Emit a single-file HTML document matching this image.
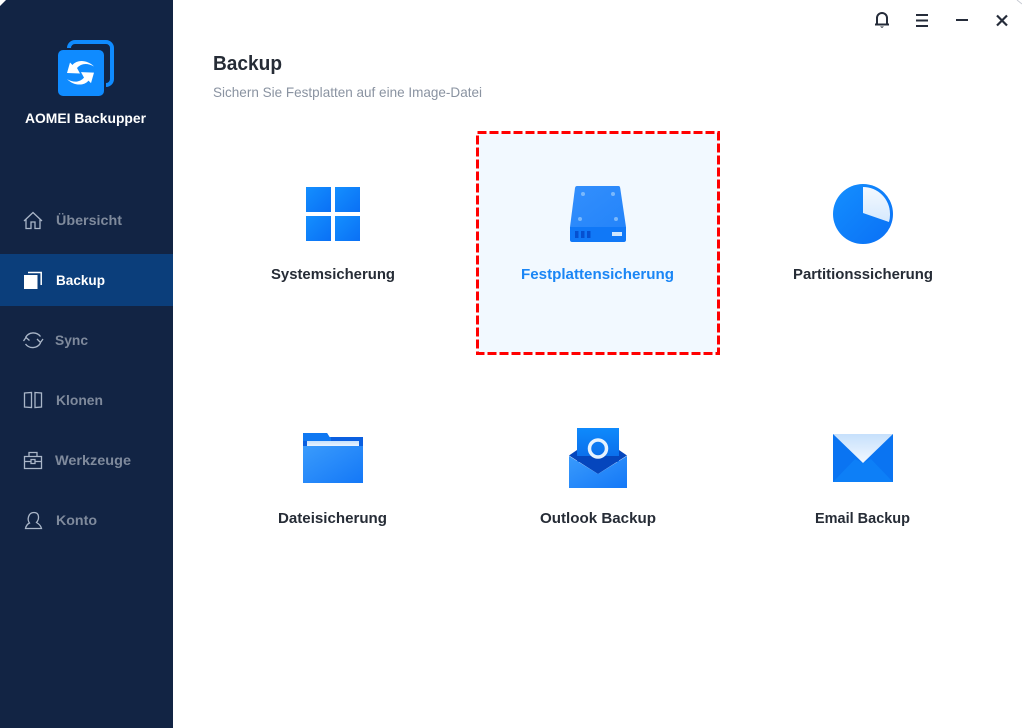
<!DOCTYPE html>
<html><head><meta charset="utf-8"><title>AOMEI Backupper</title>
<style>
html,body{margin:0;padding:0;background:#fff;width:1022px;height:728px;overflow:hidden}
svg{display:block}
text{font-family:"Liberation Sans",sans-serif}
.n{font-size:14px;font-weight:700;fill:#7f8a9c}
.l{font-size:15px;font-weight:700;fill:#262c36}
</style></head><body>
<svg width="1022" height="728" viewBox="0 0 1022 728" xmlns="http://www.w3.org/2000/svg">
<defs>
<linearGradient id="b" x1="0" y1="0" x2="1" y2="1"><stop offset="0" stop-color="#148fff"/><stop offset="1" stop-color="#0a70f5"/></linearGradient>
<linearGradient id="b2" x1="0" y1="0" x2="1" y2="1"><stop offset="0" stop-color="#3a9bfc"/><stop offset="1" stop-color="#1478f7"/></linearGradient>
<linearGradient id="d" x1="0" y1="0" x2="1" y2="1"><stop offset="0" stop-color="#338ffc"/><stop offset="1" stop-color="#2484fa"/></linearGradient>
<linearGradient id="w" x1="0" y1="0" x2="0" y2="1"><stop offset="0" stop-color="#f4f9ff"/><stop offset="1" stop-color="#d6e9fd"/></linearGradient>
<linearGradient id="w2" x1="0" y1="0" x2="0" y2="1"><stop offset="0" stop-color="#c6e0fc"/><stop offset="1" stop-color="#f2f8ff"/></linearGradient>
<linearGradient id="o" x1="0" y1="0" x2="0" y2="1"><stop offset="0" stop-color="#0f8afc"/><stop offset="1" stop-color="#0a6ae8"/></linearGradient>
</defs>
<rect x="0" y="0" width="173" height="728" fill="#122444"/>
<path d="M0 0H6L0 6Z" fill="#fff"/>
<path d="M1017 0L1022 4" stroke="#c8ccd4" stroke-width="1" fill="none"/>
<rect x="0" y="254" width="173" height="52" fill="#0b3e7b"/>

<!-- logo -->
<rect x="69" y="42" width="43" height="43" rx="6" fill="none" stroke="#0f8bff" stroke-width="4"/>
<rect x="56" y="48" width="50" height="50" rx="6" fill="#122444"/>
<rect x="58" y="50" width="46" height="46" rx="5" fill="#0f8bff"/>
<g fill="#fff">
<path d="M70 62.500L72.500 65C77 59.500 87 59.500 94 66.500C87 62.500 81 63.500 77 68L80 73.500L67 73Z"/>
<path d="M70 62.500L72.500 65C77 59.500 87 59.500 94 66.500C87 62.500 81 63.500 77 68L80 73.500L67 73Z" transform="rotate(180 80.500 72.800)"/>
</g>
<text x="25" y="123" font-size="14" font-weight="700" fill="#fff" textLength="121" lengthAdjust="spacingAndGlyphs">AOMEI Backupper</text>

<!-- nav -->
<g fill="none" stroke="#aab6c8" stroke-width="1.300">
<path d="M24 221L33 212.500L42 221M26 219V228.500H31V222H35V228.500H40V219"/>
<path d="M25.500 337.500A9 9 0 0 1 40.500 336.500M40.500 343A9 9 0 0 1 25.500 344"/>
<path d="M23.500 341L26 337.500L29.500 340.500M37 339L40.500 342.500L43 339"/>
<path d="M24.500 393L31.500 392.500V407.500L24.500 407ZM35 392.500L41.500 393V407L35 407.500Z"/>
<path d="M24.500 456.500H41.500V468.500H24.500ZM29 456.500V452.500H37V456.500M24.500 461.500H31M35 461.500H41.500M31 459.500H35V463.500H31Z"/>
<path d="M29.500 523C27 520 28 512.500 34 512.500C39.500 512.500 39.500 519 36.500 522.500C39 524 41 526 41.500 528.500H25.500C26 526 27.500 524 29.500 523Z"/>
</g>
<rect x="24" y="275" width="13.500" height="14" fill="#fff"/>
<path d="M28 272.500H41.200V285" fill="none" stroke="#fff" stroke-width="1.500"/>
<text class="n" x="56" y="225" textLength="66" lengthAdjust="spacingAndGlyphs">Übersicht</text>
<text x="56" y="285" font-size="14" font-weight="700" fill="#fff" textLength="49" lengthAdjust="spacingAndGlyphs">Backup</text>
<text class="n" x="55" y="345" textLength="33" lengthAdjust="spacingAndGlyphs">Sync</text>
<text class="n" x="56" y="405" textLength="47" lengthAdjust="spacingAndGlyphs">Klonen</text>
<text class="n" x="55" y="465" textLength="76" lengthAdjust="spacingAndGlyphs">Werkzeuge</text>
<text class="n" x="56" y="525" textLength="41" lengthAdjust="spacingAndGlyphs">Konto</text>

<!-- window controls -->
<g fill="none" stroke="#252c3a" stroke-width="2">
<path d="M877 24.500V18A5 5 0 0 1 887 18V24.500M875 24.500H889"/>
<path d="M916 15H928M916 20.500H928M916 26H928"/>
<path d="M956 20H968"/>
<path d="M997 15.500L1007 25.500M1007 15.500L997 25.500" stroke-width="2.200"/>
</g>
<path d="M880 26.500H884L882 28Z" fill="#252c3a"/>

<!-- header -->
<text x="213" y="70" font-size="20" font-weight="700" fill="#262c36" textLength="69" lengthAdjust="spacingAndGlyphs">Backup</text>
<text x="213" y="97" font-size="14" fill="#8a93a1" textLength="269" lengthAdjust="spacingAndGlyphs">Sichern Sie Festplatten auf eine Image-Datei</text>

<!-- selected -->
<rect x="477.500" y="132.500" width="241" height="221" fill="#f2f9ff" stroke="#f00" stroke-width="3" stroke-dasharray="9 3"/>

<!-- windows icon -->
<rect x="306" y="187" width="25" height="25" fill="url(#b)"/>
<rect x="335" y="187" width="25" height="25" fill="url(#b)"/>
<rect x="306" y="216" width="25" height="25" fill="url(#b)"/>
<rect x="335" y="216" width="25" height="25" fill="url(#b)"/>
<text class="l" x="271" y="279" textLength="124" lengthAdjust="spacingAndGlyphs">Systemsicherung</text>

<!-- disk icon -->
<path d="M577 186H618.500C619.500 186 620 186.800 620.200 188L626 227H570L575 188C575.200 186.800 576 186 577 186Z" fill="url(#d)"/>
<path d="M570 227H626V240C626 241.200 625 242 624 242H572C571 242 570 241.200 570 240Z" fill="#1078f7"/>
<circle cx="583" cy="194" r="2" fill="#7ab8fb"/><circle cx="613" cy="194" r="2" fill="#7ab8fb"/>
<circle cx="580" cy="219" r="2" fill="#7ab8fb"/><circle cx="616" cy="219" r="2" fill="#7ab8fb"/>
<rect x="575" y="231" width="3.500" height="7" fill="#0550d0"/><rect x="581" y="231" width="3.500" height="7" fill="#0550d0"/><rect x="587" y="231" width="3.500" height="7" fill="#0550d0"/>
<rect x="612" y="232" width="10" height="4" fill="#cfe6fd"/>
<text x="521" y="279" font-size="15" font-weight="700" fill="#1a86f5" textLength="153" lengthAdjust="spacingAndGlyphs">Festplattensicherung</text>

<!-- pie icon -->
<circle cx="863" cy="214" r="30" fill="url(#b)"/>
<path d="M863 187A27 27 0 0 1 890 214A27 27 0 0 1 889 222L863 213Z" fill="url(#w)"/>
<text class="l" x="793" y="279" textLength="140" lengthAdjust="spacingAndGlyphs">Partitionssicherung</text>

<!-- folder icon -->
<path d="M303 433H327L329.500 437H363V446H303Z" fill="#0a5fe0"/>
<path d="M303 433H327L329.500 437H331V441H303Z" fill="#0f78f2"/>
<rect x="307" y="441" width="52" height="6" fill="url(#w2)"/>
<path d="M303 446H363V483H303Z" fill="url(#b2)"/>
<text class="l" x="278" y="523" textLength="109" lengthAdjust="spacingAndGlyphs">Dateisicherung</text>

<!-- outlook icon -->
<rect x="577" y="428" width="42" height="34" fill="url(#o)"/>
<path d="M569 455.500L577 450V456H619V450L627 455.500L598 474Z" fill="#0546bd"/>
<circle cx="598" cy="448.500" r="8.500" fill="none" stroke="#e6f2fe" stroke-width="3.500"/>
<path d="M569 456L598 474L627 456V488H569Z" fill="url(#b2)"/>
<text class="l" x="540" y="523" textLength="116" lengthAdjust="spacingAndGlyphs">Outlook Backup</text>

<!-- mail icon -->
<rect x="833" y="434" width="60" height="48" fill="#0a74f2"/>
<path d="M833 482L855 459L863 463L871 459L893 482Z" fill="#0d7ff7"/>
<path d="M833 434H893L863 463Z" fill="url(#w2)"/>
<text class="l" x="815" y="523" textLength="95" lengthAdjust="spacingAndGlyphs">Email Backup</text>
</svg>
</body></html>
